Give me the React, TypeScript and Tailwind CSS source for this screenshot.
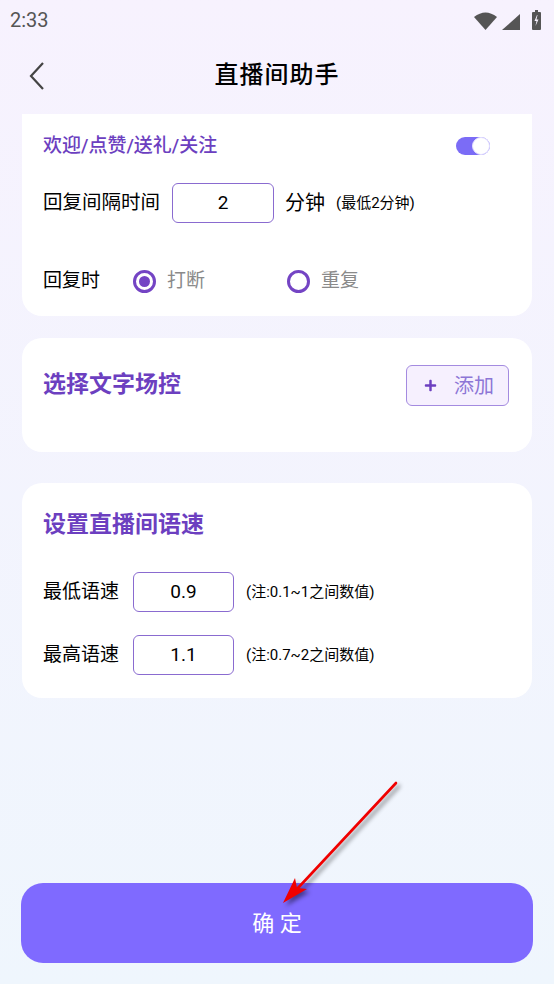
import { FaPlus } from "react-icons/fa";

const font = "font-['Roboto','Noto_Sans_CJK_SC',sans-serif]";

const StatusBar = () => (
  <div className="h-[36px] flex items-center justify-between pl-[10px] pr-[13px] pt-[3px]">
    <span className="text-[20px] text-[#555] leading-none">2:33</span>
    <div className="flex items-end gap-[5px] h-[20px]">
      <svg width="23" height="18" viewBox="0 0 23 18">
        <path d="M0 5 Q11.5 -4 23 5 L11.5 18 Z" fill="#555" />
      </svg>
      <svg width="18" height="16" viewBox="0 0 18 16">
        <path d="M18 0 L18 16 L0 16 Z" fill="#555" />
      </svg>
      <svg width="9" height="20" viewBox="0 0 9 20" className="ml-[7px]">
        <rect x="3" y="0" width="3" height="2" fill="#555" />
        <rect x="0" y="2" width="9" height="18" rx="1" fill="#555" />
        <path d="M5 5 L2.5 11 L4.5 11 L3.5 16 L6.5 9.5 L4.5 9.5 L5.5 5 Z" fill="#f6f1fd" />
      </svg>
    </div>
  </div>
);

const Header = () => (
  <div className="h-[78px] relative flex items-center justify-center">
    <svg
      width="16"
      height="28"
      viewBox="0 0 16 28"
      className="absolute left-[29px] top-[26px]"
    >
      <path d="M14 1 L2 14 L14 27" fill="none" stroke="#444" strokeWidth="2.2" />
    </svg>
    <h1 className="text-[24px] font-medium text-black tracking-[1px]">直播间助手</h1>
  </div>
);

const Toggle = () => (
  <div className="relative w-[34px] h-[18px] rounded-full bg-[#7b6cf6]">
    <div className="absolute right-0 top-0 w-[18px] h-[18px] rounded-full bg-white border border-[#e4e0ff]" />
  </div>
);

const Radio = ({ checked, label }: { checked: boolean; label: string }) => (
  <div className="flex items-center gap-[11px]">
    <div className="w-[23px] h-[23px] rounded-full border-[3px] border-[#7444c4] flex items-center justify-center">
      {checked && <div className="w-[11px] h-[11px] rounded-full bg-[#7444c4]" />}
    </div>
    <span className="text-[19px] text-[#8a8a8a]">{label}</span>
  </div>
);

const ValueBox = ({ value, w }: { value: string; w: string }) => (
  <div
    className={`${w} h-[40px] rounded-[6px] border-[1.5px] border-[#8a6bd0] flex items-center justify-center text-[19px] text-black`}
  >
    {value}
  </div>
);

const SpeedRow = ({ label, value, note }: { label: string; value: string; note: string }) => (
  <div className="flex items-center">
    <span className="text-[19px] text-black w-[90px]">{label}</span>
    <ValueBox value={value} w="w-[101px]" />
    <span className="ml-[12px] text-[15px] text-black">{note}</span>
  </div>
);

export default function App() {
  return (
    <div
      className={`${font} relative w-[554px] h-[984px] overflow-hidden flex flex-col bg-gradient-to-b from-[#f7f2fe] to-[#eff6fd]`}
    >
      <StatusBar />
      <Header />

      <div className="px-[22px] flex flex-col">
        {/* reply settings */}
        <div className="bg-white rounded-b-[20px] pl-[21px] pr-[42px] pt-[20px] pb-[23px]">
          <div className="flex items-center justify-between h-[24px]">
            <span className="text-[19px] font-medium text-[#6c3fc0]">欢迎/点赞/送礼/关注</span>
            <Toggle />
          </div>
          <div className="flex items-center mt-[25px]">
            <span className="text-[19.5px] text-black w-[129px]">回复间隔时间</span>
            <ValueBox value="2" w="w-[102px]" />
            <span className="ml-[11px] text-[20px] text-black">分钟</span>
            <span className="ml-[11px] text-[15px] text-black">(最低2分钟)</span>
          </div>
          <div className="flex items-center mt-[46px] h-[24px]">
            <span className="text-[19px] text-black w-[90px]">回复时</span>
            <Radio checked label="打断" />
            <div className="ml-[82px]">
              <Radio checked={false} label="重复" />
            </div>
          </div>
        </div>

        {/* text control */}
        <div className="mt-[22px] bg-white rounded-[20px] pl-[21px] pr-[23px] pt-[27px] pb-[46px] flex items-center justify-between">
          <span className="text-[23px] font-semibold text-[#6c3fc0]">选择文字场控</span>
          <div className="w-[103px] h-[41px] rounded-[6px] border border-[#a48be0] bg-[#f6f0fe] flex items-center pl-[17px] gap-[17px]">
            <FaPlus className="text-[13px] text-[#6c3fc0]" />
            <span className="text-[20px] text-[#8d76d6]">添加</span>
          </div>
        </div>

        {/* speech speed */}
        <div className="mt-[31px] bg-white rounded-[20px] pl-[21px] pr-[23px] pt-[29px] pb-[23px]">
          <div className="h-[26px] flex items-center">
            <span className="text-[23px] font-semibold text-[#6c3fc0]">设置直播间语速</span>
          </div>
          <div className="mt-[34px] flex flex-col gap-[23px]">
            <SpeedRow label="最低语速" value="0.9" note="(注:0.1~1之间数值)" />
            <SpeedRow label="最高语速" value="1.1" note="(注:0.7~2之间数值)" />
          </div>
        </div>
      </div>

      <div className="flex-1" />

      <div className="px-[21px] pb-[21px]">
        <button className="w-full h-[80px] rounded-[22px] bg-[#7f6aff] text-white text-[22px]">
          确 定
        </button>
      </div>

      {/* annotation arrow */}
      <svg
        className="absolute left-0 top-0 pointer-events-none drop-shadow-[3px_3px_2px_rgba(0,0,0,0.45)]"
        width="554"
        height="984"
        viewBox="0 0 554 984"
      >
        <line x1="396" y1="783" x2="298" y2="888" stroke="#f00000" strokeWidth="2.6" strokeLinecap="round" />
        <path d="M283 903 L307 889 L297 888 L295 878 Z" fill="#f00000" />
      </svg>
    </div>
  );
}
